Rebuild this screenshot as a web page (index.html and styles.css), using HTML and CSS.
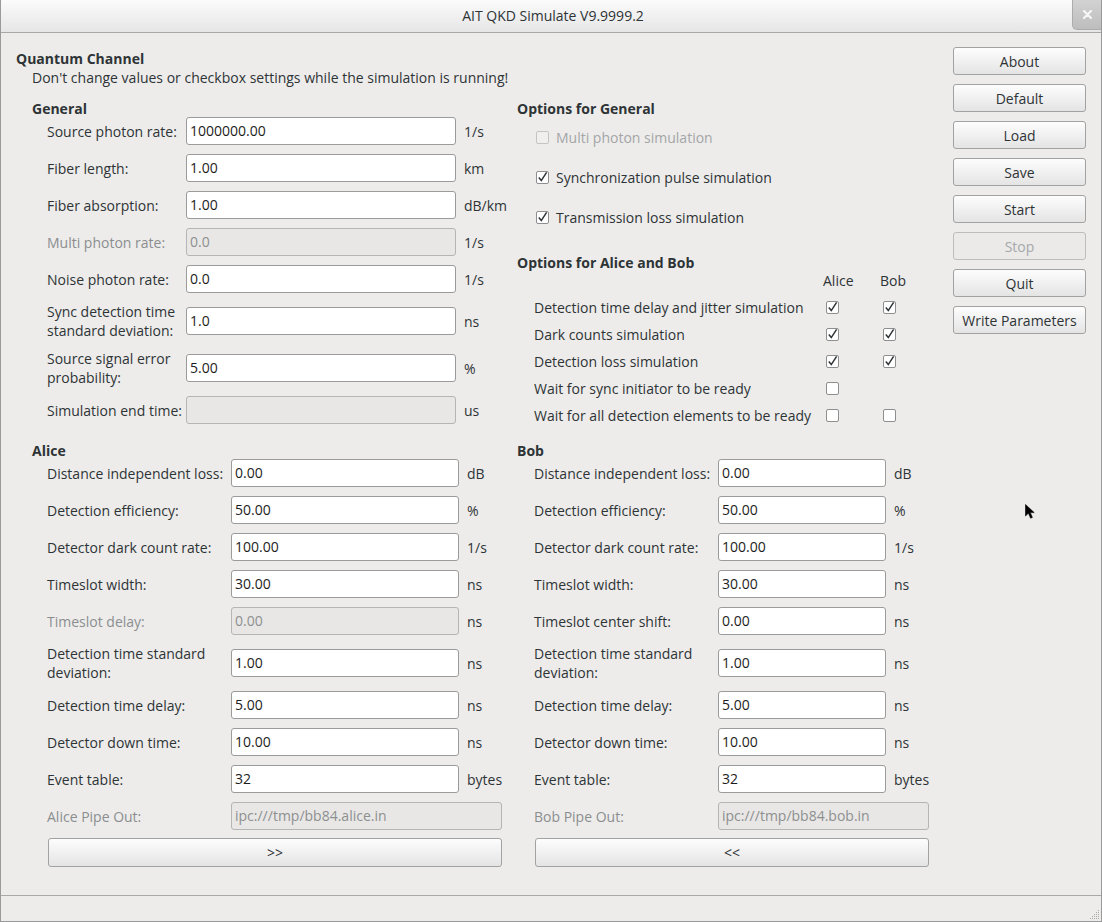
FILE: index.html
```html
<!DOCTYPE html>
<html>
<head>
<meta charset="utf-8">
<title>AIT QKD Simulate V9.9999.2</title>
<link rel="stylesheet" href="styles.css">
</head>
<body>
<div class="window">
  <header class="titlebar">
    <span></span>
    <span class="title">AIT QKD Simulate V9.9999.2</span>
    <span class="close"><svg width="9" height="9" viewBox="0 0 9 9"><path d="M1 1 L8 8 M8 1 L1 8" stroke="#f6f6f6" stroke-width="2.2" stroke-linecap="round"/></svg></span>
  </header>

  <div class="content">
    <main class="main">
      <h1 class="qc-title">Quantum Channel</h1>
      <p class="note">Don't change values or checkbox settings while the simulation is running!</p>

      <div class="groups">
        <section class="sec">
          <h2>General</h2>
          <div class="form form-general">
            <span class="lbl">Source photon rate:</span><div class="field">1000000.00</div><span class="unit">1/s</span>
            <span class="lbl">Fiber length:</span><div class="field">1.00</div><span class="unit">km</span>
            <span class="lbl">Fiber absorption:</span><div class="field">1.00</div><span class="unit">dB/km</span>
            <span class="lbl dis">Multi photon rate:</span><div class="field dis">0.0</div><span class="unit">1/s</span>
            <span class="lbl">Noise photon rate:</span><div class="field">0.0</div><span class="unit">1/s</span>
            <span class="lbl">Sync detection time<br>standard deviation:</span><div class="field">1.0</div><span class="unit">ns</span>
            <span class="lbl">Source signal error<br>probability:</span><div class="field">5.00</div><span class="unit">%</span>
            <span class="lbl">Simulation end time:</span><div class="field dis"></div><span class="unit">us</span>
          </div>
        </section>

        <section class="sec sec-opts">
          <h2>Options for General</h2>
          <div class="checks">
            <div class="check dis"><span class="cb dis"></span><span>Multi photon simulation</span></div>
            <div class="check"><span class="cb"><svg width="11" height="11" viewBox="0 0 11 11"><path d="M1.8 5.6 L4.3 8.6 L9.6 0.4" fill="none" stroke="#2e3436" stroke-width="1.5"/></svg></span><span>Synchronization pulse simulation</span></div>
            <div class="check"><span class="cb"><svg width="11" height="11" viewBox="0 0 11 11"><path d="M1.8 5.6 L4.3 8.6 L9.6 0.4" fill="none" stroke="#2e3436" stroke-width="1.5"/></svg></span><span>Transmission loss simulation</span></div>
          </div>
          <h2 class="second">Options for Alice and Bob</h2>
          <div class="ab">
            <span></span><span class="colhead">Alice</span><span class="colhead">Bob</span>
            <span>Detection time delay and jitter simulation</span>
            <span class="cb"><svg width="11" height="11" viewBox="0 0 11 11"><path d="M1.8 5.6 L4.3 8.6 L9.6 0.4" fill="none" stroke="#2e3436" stroke-width="1.5"/></svg></span>
            <span class="cb"><svg width="11" height="11" viewBox="0 0 11 11"><path d="M1.8 5.6 L4.3 8.6 L9.6 0.4" fill="none" stroke="#2e3436" stroke-width="1.5"/></svg></span>
            <span>Dark counts simulation</span>
            <span class="cb"><svg width="11" height="11" viewBox="0 0 11 11"><path d="M1.8 5.6 L4.3 8.6 L9.6 0.4" fill="none" stroke="#2e3436" stroke-width="1.5"/></svg></span>
            <span class="cb"><svg width="11" height="11" viewBox="0 0 11 11"><path d="M1.8 5.6 L4.3 8.6 L9.6 0.4" fill="none" stroke="#2e3436" stroke-width="1.5"/></svg></span>
            <span>Detection loss simulation</span>
            <span class="cb"><svg width="11" height="11" viewBox="0 0 11 11"><path d="M1.8 5.6 L4.3 8.6 L9.6 0.4" fill="none" stroke="#2e3436" stroke-width="1.5"/></svg></span>
            <span class="cb"><svg width="11" height="11" viewBox="0 0 11 11"><path d="M1.8 5.6 L4.3 8.6 L9.6 0.4" fill="none" stroke="#2e3436" stroke-width="1.5"/></svg></span>
            <span>Wait for sync initiator to be ready</span>
            <span class="cb"></span>
            <span></span>
            <span>Wait for all detection elements to be ready</span>
            <span class="cb"></span>
            <span class="cb"></span>
          </div>
        </section>

        <section class="sec">
          <h2>Alice</h2>
          <div class="form form-alice">
            <span class="lbl">Distance independent loss:</span><div class="field">0.00</div><span class="unit">dB</span>
            <span class="lbl">Detection efficiency:</span><div class="field">50.00</div><span class="unit">%</span>
            <span class="lbl">Detector dark count rate:</span><div class="field">100.00</div><span class="unit">1/s</span>
            <span class="lbl">Timeslot width:</span><div class="field">30.00</div><span class="unit">ns</span>
            <span class="lbl dis">Timeslot delay:</span><div class="field dis">0.00</div><span class="unit">ns</span>
            <span class="lbl">Detection time standard<br>deviation:</span><div class="field">1.00</div><span class="unit">ns</span>
            <span class="lbl">Detection time delay:</span><div class="field">5.00</div><span class="unit">ns</span>
            <span class="lbl">Detector down time:</span><div class="field">10.00</div><span class="unit">ns</span>
            <span class="lbl">Event table:</span><div class="field">32</div><span class="unit">bytes</span>
            <span class="lbl dis">Alice Pipe Out:</span><div class="field dis span2">ipc:///tmp/bb84.alice.in</div>
            <div class="btn wide">&gt;&gt;</div>
          </div>
        </section>

        <section class="sec">
          <h2>Bob</h2>
          <div class="form form-bob">
            <span class="lbl">Distance independent loss:</span><div class="field">0.00</div><span class="unit">dB</span>
            <span class="lbl">Detection efficiency:</span><div class="field">50.00</div><span class="unit">%</span>
            <span class="lbl">Detector dark count rate:</span><div class="field">100.00</div><span class="unit">1/s</span>
            <span class="lbl">Timeslot width:</span><div class="field">30.00</div><span class="unit">ns</span>
            <span class="lbl">Timeslot center shift:</span><div class="field">0.00</div><span class="unit">ns</span>
            <span class="lbl">Detection time standard<br>deviation:</span><div class="field">1.00</div><span class="unit">ns</span>
            <span class="lbl">Detection time delay:</span><div class="field">5.00</div><span class="unit">ns</span>
            <span class="lbl">Detector down time:</span><div class="field">10.00</div><span class="unit">ns</span>
            <span class="lbl">Event table:</span><div class="field">32</div><span class="unit">bytes</span>
            <span class="lbl dis">Bob Pipe Out:</span><div class="field dis span2">ipc:///tmp/bb84.bob.in</div>
            <div class="btn wide">&lt;&lt;</div>
          </div>
        </section>
      </div>
    </main>

    <aside class="side">
      <div class="btn">About</div>
      <div class="btn">Default</div>
      <div class="btn">Load</div>
      <div class="btn">Save</div>
      <div class="btn">Start</div>
      <div class="btn dis">Stop</div>
      <div class="btn">Quit</div>
      <div class="btn">Write Parameters</div>
    </aside>
  </div>

  <footer class="statusbar">
    <svg class="grip" width="11" height="11" viewBox="0 0 11 11">
      <g fill="#a9a9a9">
        <rect x="9" y="1" width="1" height="1"/>
        <rect x="7" y="3" width="1" height="1"/><rect x="9" y="3" width="1" height="1"/>
        <rect x="5" y="5" width="1" height="1"/><rect x="7" y="5" width="1" height="1"/><rect x="9" y="5" width="1" height="1"/>
        <rect x="3" y="7" width="1" height="1"/><rect x="5" y="7" width="1" height="1"/><rect x="7" y="7" width="1" height="1"/><rect x="9" y="7" width="1" height="1"/>
        <rect x="1" y="9" width="1" height="1"/><rect x="3" y="9" width="1" height="1"/><rect x="5" y="9" width="1" height="1"/><rect x="7" y="9" width="1" height="1"/><rect x="9" y="9" width="1" height="1"/>
      </g>
    </svg>
  </footer>

  <svg class="cursor" width="11" height="16" viewBox="0 0 11 16">
    <path d="M0.5 0.5 V12 L3.4 9.2 L5.6 14.2 L7.4 13.4 L5.3 8.6 H9.2 Z" fill="#000" stroke="#000" stroke-width="0.6"/>
  </svg>
</div>
</body>
</html>
```

FILE: styles.css
```css
* { box-sizing: border-box; }
html, body { margin: 0; padding: 0; }
body {
  width: 1102px;
  height: 922px;
  overflow: hidden;
  background: #edeceb;
  font-family: "Open Sans", "DejaVu Sans", sans-serif;
  font-size: 14px;
  color: #2e3436;
}

.window {
  position: relative;
  width: 1102px;
  height: 922px;
  display: flex;
  flex-direction: column;
  border: 1px solid #9a9a9a;
  border-top: none;
  background: #edeceb;
}

/* title bar */
.titlebar {
  flex: 0 0 33px;
  display: grid;
  grid-template-columns: 1fr auto 1fr;
  align-items: center;
  background: linear-gradient(#fbfbfb, #e6e6e6);
  border-bottom: 1px solid #a8a8a8;
}
.title { color: #2e3436; line-height: 18px; margin-left: 4px; }
.close {
  justify-self: end;
  align-self: start;
  width: 29px;
  height: 30px;
  display: flex;
  align-items: center;
  justify-content: center;
  background: linear-gradient(#d2d2d2, #bdbdbd);
  border-left: 1px solid #acacac;
  border-bottom: 1px solid #acacac;
  border-bottom-left-radius: 5px;
}

/* main area */
.content { flex: 1; display: flex; min-height: 0; }
.main { flex: 1; padding: 17px 0 0 15px; }
.qc-title { margin: 0; font-size: 14px; font-weight: bold; line-height: 18px; }
.note { margin: 0 0 0 16px; line-height: 19px; }

.groups {
  margin: 13px 0 0 16px;
  display: grid;
  grid-template-columns: 485px 1fr;
  row-gap: 17px;
}
.sec h2 { margin: 0; font-size: 14px; font-weight: bold; line-height: 17px; }

.form { display: grid; row-gap: 9px; align-items: center; justify-content: start; }
.form-general { grid-template-columns: 139px 270px max-content; padding-left: 15px; }
.form-alice { grid-template-columns: 184px 228px max-content; padding-left: 15px; }
.form-bob { grid-template-columns: 184px 168px max-content; padding-left: 17px; }

.lbl { line-height: 19px; white-space: nowrap; }
.lbl.dis { color: #8b8e8f; }
.field {
  height: 28px;
  border: 1px solid #9b9b9b;
  border-radius: 3px;
  background: #fff;
  padding: 0 3px;
  line-height: 26px;
  color: #1d1d1d;
  white-space: nowrap;
  overflow: hidden;
}
.field.dis { background: #e8e7e6; border-color: #b5b5b5; color: #8d8f90; }
.unit { padding-left: 8px; line-height: 19px; white-space: nowrap; }
.span2 { grid-column: 2 / 4; }

.btn {
  display: flex;
  align-items: center;
  justify-content: center;
  border: 1px solid #a2a2a2;
  border-radius: 3px;
  background: linear-gradient(#fdfdfd, #e4e4e4);
  color: #2e3436;
  white-space: nowrap;
}
.btn.dis { color: #a6a8a9; background: #ebeae9; border-color: #bdbdbd; }
.wide { grid-column: 1 / 4; height: 29px; margin-left: 1px; margin-top: -1px; }

/* options */
.checks { margin-top: 9px; padding-left: 19px; display: flex; flex-direction: column; gap: 18px; }
.check { height: 22px; display: flex; align-items: center; gap: 7px; }
.check.dis { color: #a4a6a7; }
.sec-opts h2.second { margin-top: 26px; }

.cb {
  width: 13px;
  height: 13px;
  border: 1px solid #8e8e8e;
  border-radius: 2px;
  background: #fff;
  display: flex;
  align-items: center;
  justify-content: center;
}
.cb svg { overflow: visible; }
.cb.dis { border-color: #c4c4c4; background: #f0efee; }

.ab {
  display: grid;
  grid-template-columns: 289px 57px auto;
  grid-auto-rows: 19px;
  row-gap: 8px;
  padding-left: 17px;
  align-items: center;
  white-space: nowrap;
}
.ab .cb { margin-left: 3px; }

/* side buttons */
.side {
  width: 133px;
  margin-right: 15px;
  padding-top: 14px;
  display: flex;
  flex-direction: column;
  gap: 9px;
}
.side .btn { height: 28px; }

/* status bar */
.statusbar {
  flex: 0 0 26px;
  border-top: 1px solid #a9a9a9;
  display: flex;
  justify-content: flex-end;
  align-items: flex-end;
}
.grip { display: block; margin: 0 1px 1px 0; }

.cursor { position: absolute; left: 1024px; top: 504px; }
```
